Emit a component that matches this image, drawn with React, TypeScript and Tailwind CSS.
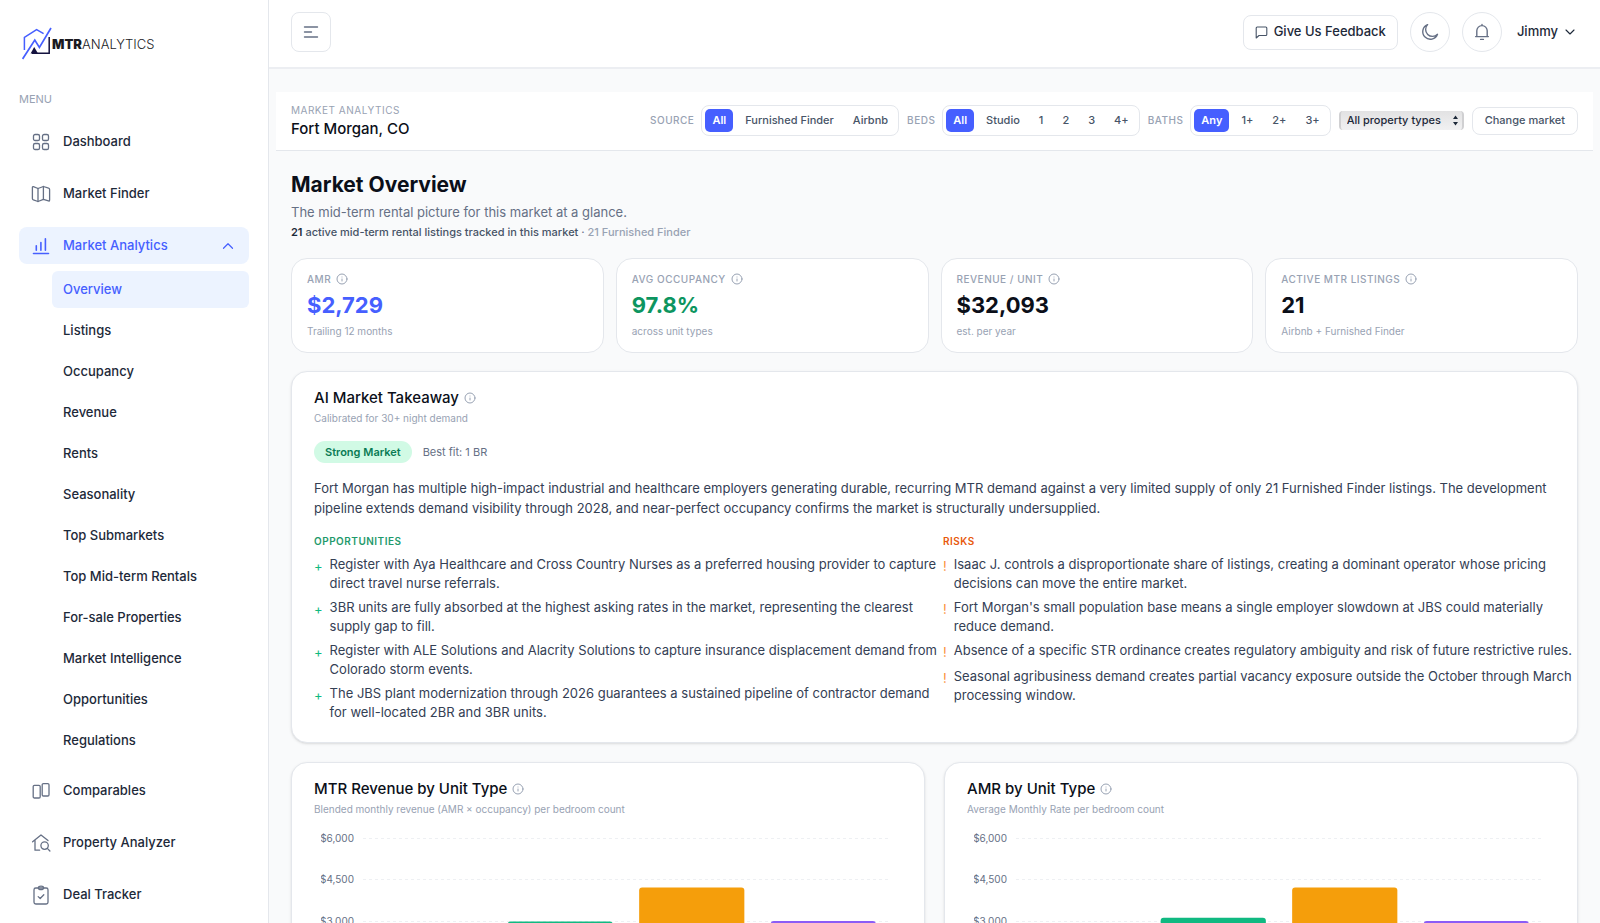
import React, { useState } from 'react';
import { ChevronDown, ChevronUp, Info } from 'lucide-react';

interface KpiCard {
  label: string;
  value: string;
  note: string;
  valueClass: string;
}

interface Bar {
  slot: number;
  value: number;
  color: string;
}

const analyticsPages: string[] = [
  'Overview',
  'Listings',
  'Occupancy',
  'Revenue',
  'Rents',
  'Seasonality',
  'Top Submarkets',
  'Top Mid-term Rentals',
  'For-sale Properties',
  'Market Intelligence',
  'Opportunities',
  'Regulations',
];

const kpis: KpiCard[] = [
  { label: 'AMR', value: '$2,729', note: 'Trailing 12 months', valueClass: 'text-[#465fff]' },
  { label: 'Avg Occupancy', value: '97.8%', note: 'across unit types', valueClass: 'text-[#0d9560]' },
  { label: 'Revenue / Unit', value: '$32,093', note: 'est. per year', valueClass: 'text-[#0b0f19]' },
  { label: 'Active MTR Listings', value: '21', note: 'Airbnb + Furnished Finder', valueClass: 'text-[#0b0f19]' },
];

const opportunities: string[] = [
  'Register with Aya Healthcare and Cross Country Nurses as a preferred housing provider to capture direct travel nurse referrals.',
  '3BR units are fully absorbed at the highest asking rates in the market, representing the clearest supply gap to fill.',
  'Register with ALE Solutions and Alacrity Solutions to capture insurance displacement demand from Colorado storm events.',
  'The JBS plant modernization through 2026 guarantees a sustained pipeline of contractor demand for well-located 2BR and 3BR units.',
];

const risks: string[] = [
  'Isaac J. controls a disproportionate share of listings, creating a dominant operator whose pricing decisions can move the entire market.',
  "Fort Morgan's small population base means a single employer slowdown at JBS could materially reduce demand.",
  'Absence of a specific STR ordinance creates regulatory ambiguity and risk of future restrictive rules.',
  'Seasonal agribusiness demand creates partial vacancy exposure outside the October through March processing window.',
];

const revenueBars: Bar[] = [
  { slot: 1, value: 3000, color: '#10b981' },
  { slot: 2, value: 4240, color: '#f59e0b' },
  { slot: 3, value: 3020, color: '#8b5cf6' },
];

const amrBars: Bar[] = [
  { slot: 1, value: 3140, color: '#10b981' },
  { slot: 2, value: 4240, color: '#f59e0b' },
  { slot: 3, value: 3020, color: '#8b5cf6' },
];

const iconProps = {
  width: 20,
  height: 20,
  viewBox: '0 0 20 20',
  fill: 'none',
  stroke: 'currentColor',
  strokeWidth: 1.3,
  strokeLinecap: 'round' as const,
  strokeLinejoin: 'round' as const,
  'aria-hidden': true,
};

const DashboardIcon = () => (
  <svg {...iconProps}>
    <rect x="2.5" y="2.5" width="6" height="6" rx="1.6" />
    <rect x="11.5" y="2.5" width="6" height="6" rx="1.6" />
    <rect x="2.5" y="11.5" width="6" height="6" rx="1.6" />
    <rect x="11.5" y="11.5" width="6" height="6" rx="1.6" />
  </svg>
);

const MapIcon = () => (
  <svg {...iconProps}>
    <path d="M1.4 3.4q0-1 1-.7l4.6 1.8 5.4-2 5.2 1.7q1 .3 1 1.3V16q0 1.3-1.1.9l-5.1-1.6-5.4 2.2-4.6-1.6q-1-.4-1-1.4z" />
    <path d="M7 4.5v13M12.4 2.5v12.8" />
  </svg>
);

const AnalyticsIcon = () => (
  <svg {...iconProps} strokeWidth={1.6}>
    <path d="M2.5 17.5h15M5.3 9.8v4.4M9.9 6.6v7.6M14.4 2.8v11.4" />
  </svg>
);

const ComparablesIcon = () => (
  <svg {...iconProps}>
    <rect x="2.2" y="4.4" width="7" height="12.6" rx="1.2" />
    <rect x="11.2" y="2.6" width="6.8" height="12.4" rx="1.2" />
  </svg>
);

const PropertyIcon = () => (
  <svg {...iconProps}>
    <path d="M1.6 8.8 10 2l7 5.6M4 7v10.2h4.6" />
    <circle cx="13.6" cy="12.6" r="3.7" />
    <path d="m16.3 15.4 2.6 2.6" />
  </svg>
);

const DealIcon = () => (
  <svg {...iconProps}>
    <rect x="3" y="3" width="14" height="16" rx="1.8" />
    <path d="M7.4 3c0-1.2.9-1.8 2.6-1.8s2.6.6 2.6 1.8c0 1.1-.9 1.7-2.6 1.7S7.4 4.1 7.4 3z" />
    <path d="m7.2 11.6 2 1.9 3.6-3.8" />
  </svg>
);

const Logo = () => (
  <a href="#" className="flex items-center text-[13px] leading-4 text-[#1b1b1f]" aria-label="MTR Analytics home">
    <svg width="30" height="34" viewBox="0 0 30 34" fill="none" aria-hidden="true">
      <path d="M2.4 23V10.4L14.6 2.6l7 4" stroke="#465fff" strokeWidth="1.5" />
      <path d="M.6 32 12.8 13l4.6 7.4L29 1" stroke="#465fff" strokeWidth="1.7" />
      <path d="M10 26.2h17.2V10" stroke="#14123f" strokeWidth="1.5" />
      <path d="M8.6 26.6 12.2 20l3.8 6.6z" fill="#14123f" />
    </svg>
    <span className="font-black">MTR</span>
    <span className="font-light">ANALYTICS</span>
  </a>
);

const NavItem: React.FC<{ label: string; icon: React.ReactNode }> = ({ label, icon }) => (
  <a href="#" className="flex h-[37px] items-center gap-3 rounded-lg px-3 text-[#1d2939] hover:bg-gray-50">
    <span className="text-[#667085]">{icon}</span>
    {label}
  </a>
);

const Segmented: React.FC<{ label: string; options: string[] }> = ({ label, options }) => {
  const [selected, setSelected] = useState(options[0]);
  return (
    <div className="flex items-center gap-[7px]" role="group" aria-label={label}>
      <span className="text-[10px] font-medium uppercase tracking-wider text-[#98a2b3]">{label}</span>
      <div className="flex gap-[5px] rounded-lg border border-[#e4e7ec] p-[3px]">
        {options.map((option) => (
          <button
            key={option}
            type="button"
            aria-pressed={option === selected}
            onClick={() => setSelected(option)}
            className={
              option === selected
                ? 'h-[23px] rounded-[5px] bg-[#465fff] px-[7px] text-[11px] font-semibold text-white'
                : 'h-[23px] rounded-[5px] px-[7px] text-[11px] font-medium text-[#475467]'
            }
          >
            {option}
          </button>
        ))}
      </div>
    </div>
  );
};

const PlotChart: React.FC<{ bars: Bar[]; label: string }> = ({ bars, label }) => {
  const top = 10;
  const baseline = 175;
  const yOf = (value: number) => baseline - (value / 6000) * (baseline - top);
  const ticks = [6000, 4500, 3000, 1500, 0];

  return (
    <div className="mt-[11px] flex pl-[7px] pr-[13px]">
      <svg className="w-[42px] shrink-0" height="190" aria-hidden="true">
        {ticks.map((tick) => (
          <text key={tick} x="33" y={yOf(tick) + 4} textAnchor="end" fontSize="10" fill="#667085">
            {'$' + tick.toLocaleString('en-US')}
          </text>
        ))}
      </svg>
      <svg className="min-w-0 flex-1" height="190" role="img" aria-label={label}>
        {ticks.map((tick) => (
          <line
            key={tick}
            x1="0"
            x2="100%"
            y1={Math.round(yOf(tick)) + 0.5}
            y2={Math.round(yOf(tick)) + 0.5}
            stroke="#eef0f3"
            strokeDasharray="3 3"
          />
        ))}
        {bars.map((bar) => (
          <rect
            key={bar.slot}
            x={bar.slot * 25 + 2.5 + '%'}
            y={yOf(bar.value) + 1}
            width="20%"
            height={baseline - yOf(bar.value)}
            rx="3"
            fill={bar.color}
          />
        ))}
      </svg>
    </div>
  );
};

const ChartCard: React.FC<{ title: string; subtitle: string; bars: Bar[] }> = ({ title, subtitle, bars }) => (
  <section className="rounded-2xl border border-[#e4e7ec] bg-white px-[22px] pt-4 pb-5 shadow-sm">
    <h2 className="flex items-center gap-[5px] text-[15px] leading-5 font-medium text-[#0b0f19]">
      {title}
      <Info size={12} className="text-[#98a2b3]" />
    </h2>
    <p className="mt-[2px] text-[10px] leading-4 text-[#98a2b3]">{subtitle}</p>
    <PlotChart bars={bars} label={title} />
  </section>
);

const Sidebar = () => {
  const [isOpen, setIsOpen] = useState(true);
  return (
    <aside className="w-[269px] shrink-0 border-r border-[#e4e7ec] bg-white px-[19px] text-[13px] font-medium">
      <div className="pt-[27px] pl-[3px]">
        <Logo />
      </div>
      <h2 className="mt-[30px] text-[11px] leading-4 font-normal text-[#98a2b3]">MENU</h2>
      <nav className="mt-4 flex flex-col gap-[15px]">
        <NavItem label="Dashboard" icon={<DashboardIcon />} />
        <NavItem label="Market Finder" icon={<MapIcon />} />
        <div>
          <button
            type="button"
            aria-expanded={isOpen}
            onClick={() => setIsOpen(!isOpen)}
            className="flex h-[37px] w-full items-center gap-3 rounded-lg bg-[#ecf3ff] px-3 text-[#465fff]"
          >
            <AnalyticsIcon />
            Market Analytics
            <ChevronUp size={18} strokeWidth={1.6} className="ml-auto" />
          </button>
          {isOpen && (
            <ul className="-mb-[2px] mt-[7px] ml-[33px] flex flex-col gap-1">
              {analyticsPages.map((page) => (
                <li key={page}>
                  <a
                    href="#"
                    className={
                      page === 'Overview'
                        ? 'flex h-[37px] items-center rounded-md bg-[#ecf3ff] px-[11px] text-[#465fff]'
                        : 'flex h-[37px] items-center rounded-md px-[11px] text-[#1d2939] hover:bg-gray-50'
                    }
                  >
                    {page}
                  </a>
                </li>
              ))}
            </ul>
          )}
        </div>
        <NavItem label="Comparables" icon={<ComparablesIcon />} />
        <NavItem label="Property Analyzer" icon={<PropertyIcon />} />
        <NavItem label="Deal Tracker" icon={<DealIcon />} />
      </nav>
    </aside>
  );
};

const Header = () => (
  <header className="flex items-start justify-between border-b-2 border-[#eceef2] bg-white px-[22px] pt-3 pb-[15px]">
    <button
      type="button"
      aria-label="Toggle sidebar"
      className="flex h-10 w-10 items-center justify-center rounded-lg border border-[#e4e7ec] text-[#667085]"
    >
      <svg width="16" height="14" viewBox="0 0 16 14" stroke="currentColor" strokeWidth="1.4" strokeLinecap="round" aria-hidden="true">
        <path d="M1.5 2h13M1.5 7h7M1.5 12h13" />
      </svg>
    </button>

    <div className="flex items-center gap-3 text-[13px] font-medium text-[#1d2939]">
      <button type="button" className="flex h-[35px] items-center gap-[6px] rounded-lg border border-[#e4e7ec] px-[11px]">
        <svg width="13" height="13" viewBox="0 0 13 13" fill="none" stroke="#475467" strokeWidth="1.1" strokeLinejoin="round" aria-hidden="true">
          <path d="M2.8 1h8q1 0 1 1v6.5q0 1-1 1H4L1.2 12V2Q1.2 1 2.2 1z" />
        </svg>
        Give Us Feedback
      </button>
      <button
        type="button"
        aria-label="Toggle dark mode"
        className="flex h-10 w-10 items-center justify-center rounded-full border border-[#e4e7ec] text-[#667085]"
      >
        <svg width="18" height="18" viewBox="0 0 18 18" fill="none" stroke="currentColor" strokeWidth="1.4" strokeLinejoin="round" aria-hidden="true">
          <path d="M6.6 1.6a7.6 7.6 0 1 0 9.9 9.7A6.9 6.9 0 0 1 6.6 1.6z" />
        </svg>
      </button>
      <button
        type="button"
        aria-label="Notifications"
        className="flex h-10 w-10 items-center justify-center rounded-full border border-[#e4e7ec] text-[#667085]"
      >
        <svg width="18" height="18" viewBox="0 0 18 18" fill="none" stroke="currentColor" strokeWidth="1.4" strokeLinecap="round" strokeLinejoin="round" aria-hidden="true">
          <path d="M9 1.4v1M3.8 13.6V7.8a5.2 5.2 0 0 1 10.4 0v5.8M2.6 13.6h12.8M7.6 16.4h2.8" />
        </svg>
      </button>
      <button type="button" className="flex items-center gap-1 pl-[3px]">
        Jimmy
        <ChevronDown size={16} strokeWidth={1.7} />
      </button>
    </div>
  </header>
);

const FilterBar = () => (
  <div className="mx-[7px] mt-[23px] flex items-center justify-between border-b border-[#e4e7ec] bg-white px-[15px] pt-[10px] pb-[11px]">
    <div>
      <p className="text-[10px] leading-4 tracking-wider text-[#98a2b3] uppercase">Market Analytics</p>
      <p className="text-[15px] leading-[21px] font-medium text-[#0b0f19]">Fort Morgan, CO</p>
    </div>
    <div className="flex items-center gap-2">
      <Segmented label="Source" options={['All', 'Furnished Finder', 'Airbnb']} />
      <Segmented label="Beds" options={['All', 'Studio', '1', '2', '3', '4+']} />
      <Segmented label="Baths" options={['Any', '1+', '2+', '3+']} />
      <div className="relative">
        <select
          aria-label="Property type"
          className="block h-[19px] w-[125px] appearance-none rounded-[4px] border-x-2 border-[#d0d0d2] bg-linear-to-b from-[#e2e2e3] to-[#f1f1f2] pl-[6px] text-[11px] font-medium text-[#1d2939]"
        >
          <option>All property types</option>
        </select>
        <svg className="pointer-events-none absolute top-[4px] right-[5px]" width="7" height="11" viewBox="0 0 7 11" aria-hidden="true">
          <path d="M3.5.5 6 4H1zM3.5 10.5 1 7h5z" fill="#1d2939" />
        </svg>
      </div>
      <button type="button" className="h-7 rounded-lg border border-[#e4e7ec] px-3 text-[11px] font-medium text-[#475467]">
        Change market
      </button>
    </div>
  </div>
);

const Takeaway = () => (
  <section className="mt-[18px] rounded-2xl border border-[#e4e7ec] bg-white px-[22px] pt-4 pb-[20px] shadow-sm">
    <h2 className="flex items-center gap-[5px] text-[15px] leading-5 font-medium text-[#0b0f19]">
      AI Market Takeaway
      <Info size={12} className="text-[#98a2b3]" />
    </h2>
    <p className="mt-[2px] text-[10px] leading-4 text-[#98a2b3]">Calibrated for 30+ night demand</p>
    <div className="mt-[15px] flex items-center gap-[11px] text-[11px]">
      <span className="rounded-full bg-[#d1fae5] px-[11px] py-[3px] leading-4 font-semibold text-[#0b7a55]">Strong Market</span>
      <span className="text-[#667085]">Best fit: 1 BR</span>
    </div>
    <p className="mt-[15px] text-[13px] leading-5 text-[#344054]">
      Fort Morgan has multiple high-impact industrial and healthcare employers generating durable, recurring MTR demand
      against a very limited supply of only 21 Furnished Finder listings. The development pipeline extends demand
      visibility through 2028, and near-perfect occupancy confirms the market is structurally undersupplied.
    </p>
    <div className="-mr-[17px] mt-[15px] grid grid-cols-2">
      <div>
        <h3 className="text-[10px] leading-4 font-semibold tracking-wider text-[#1f9a6c] uppercase">Opportunities</h3>
        <ul className="mt-[6px] flex flex-col gap-[5px] text-[13px] leading-[19px] text-[#344054]">
          {opportunities.map((item) => (
            <li key={item} className="flex items-start gap-[7px]">
              <span className="mt-[2px] text-[#10b981]">+</span>
              <span>{item}</span>
            </li>
          ))}
        </ul>
      </div>
      <div>
        <h3 className="text-[10px] leading-4 font-semibold tracking-wider text-[#e8590c] uppercase">Risks</h3>
        <ul className="mt-[6px] flex flex-col gap-[5px] text-[13px] leading-[19px] text-[#344054]">
          {risks.map((item) => (
            <li key={item} className="flex items-start gap-[7px]">
              <span className="mt-[2px] text-[#fb923c]">!</span>
              <span>{item}</span>
            </li>
          ))}
        </ul>
      </div>
    </div>
  </section>
);

const App: React.FC = () => {
  return (
    <div className="flex h-screen overflow-hidden bg-[#f9fafb] font-['Inter',sans-serif] text-[#1d2939]">
      <Sidebar />
      <div className="min-w-0 flex-1">
        <Header />
        <FilterBar />
        <main className="px-[22px] pt-5">
          <h1 className="text-[21px] leading-7 font-bold text-[#0b0f19]">Market Overview</h1>
          <p className="mt-[3px] text-[13px] leading-5 text-[#667085]">The mid-term rental picture for this market at a glance.</p>
          <p className="mt-[2px] text-[11px] leading-4 font-medium text-[#667085]">
            <span className="text-[#475467]">
              <b className="font-semibold text-[#1d2939]">21</b> active mid-term rental listings tracked in this market
            </span>{' '}
            · <span className="text-[#98a2b3]">21 Furnished Finder</span>
          </p>

          {/* Headline numbers */}
          <div className="mt-[18px] grid grid-cols-4 gap-3">
            {kpis.map((kpi) => (
              <div key={kpi.label} className="rounded-2xl border border-[#e4e7ec] bg-white px-[15px] pt-3 pb-[13px]">
                <p className="flex items-center gap-[5px] text-[10px] leading-4 font-medium tracking-wider text-[#98a2b3] uppercase">
                  {kpi.label}
                  <Info size={12} />
                </p>
                <p className={`mt-1 text-[22px] leading-7 font-bold ${kpi.valueClass}`}>{kpi.value}</p>
                <p className="mt-1 text-[10px] leading-4 text-[#98a2b3]">{kpi.note}</p>
              </div>
            ))}
          </div>

          <Takeaway />

          <div className="mt-[19px] grid grid-cols-2 gap-[19px]">
            <ChartCard
              title="MTR Revenue by Unit Type"
              subtitle="Blended monthly revenue (AMR × occupancy) per bedroom count"
              bars={revenueBars}
            />
            <ChartCard title="AMR by Unit Type" subtitle="Average Monthly Rate per bedroom count" bars={amrBars} />
          </div>
        </main>
      </div>
    </div>
  );
};

export default App;
